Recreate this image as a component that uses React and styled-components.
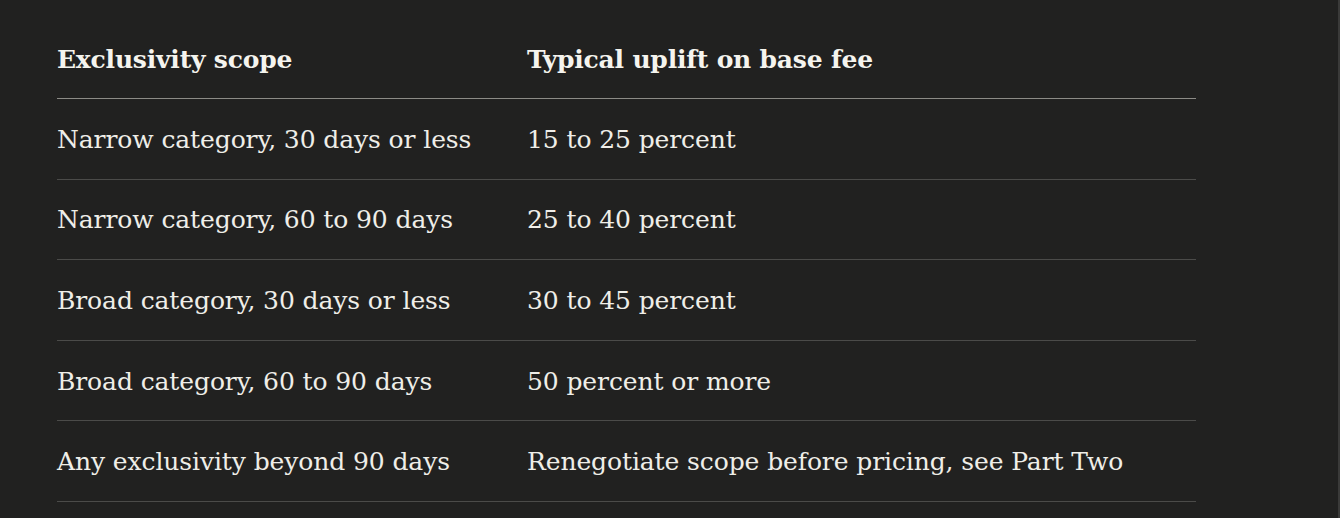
import React from "react";
import styled, { createGlobalStyle } from "styled-components";

const Global = createGlobalStyle`
  html, body { margin: 0; padding: 0; background: #212120; }
  body { font-family: "DejaVu Serif", serif; }
`;

const Page = styled.div`
  width: 1340px;
  height: 518px;
  box-sizing: border-box;
  padding: 19px 142px 0 57px;
  background: #212120;
  border-right: 2px solid #3a3a39;
  overflow: hidden;
`;

const Table = styled.div`
  display: grid;
  grid-template-columns: 470px 1fr;
  grid-template-rows: 80px;
  grid-auto-rows: 80.6px;
`;

const Cell = styled.div`
  box-sizing: border-box;
  display: flex;
  align-items: center;
  padding-top: 1px;
  color: ${(p) => (p.$head ? "#f5f4ee" : "#efeee8")};
  font-size: 25px;
  font-weight: ${(p) => (p.$head ? 700 : 400)};
  letter-spacing: ${(p) => (p.$head ? "-0.2px" : "-0.1px")};
  border-bottom: 1px solid ${(p) => (p.$head ? "#8c8b86" : "#4b4b49")};
  white-space: nowrap;
`;

const rows = [
  ["Narrow category, 30 days or less", "15 to 25 percent"],
  ["Narrow category, 60 to 90 days", "25 to 40 percent"],
  ["Broad category, 30 days or less", "30 to 45 percent"],
  ["Broad category, 60 to 90 days", "50 percent or more"],
  ["Any exclusivity beyond 90 days", "Renegotiate scope before pricing, see Part Two"],
];

export default function App() {
  return (
    <>
      <Global />
      <Page>
        <Table>
          <Cell $head>Exclusivity scope</Cell>
          <Cell $head>Typical uplift on base fee</Cell>
          {rows.map(([a, b]) => (
            <React.Fragment key={a}>
              <Cell>{a}</Cell>
              <Cell>{b}</Cell>
            </React.Fragment>
          ))}
        </Table>
      </Page>
    </>
  );
}
